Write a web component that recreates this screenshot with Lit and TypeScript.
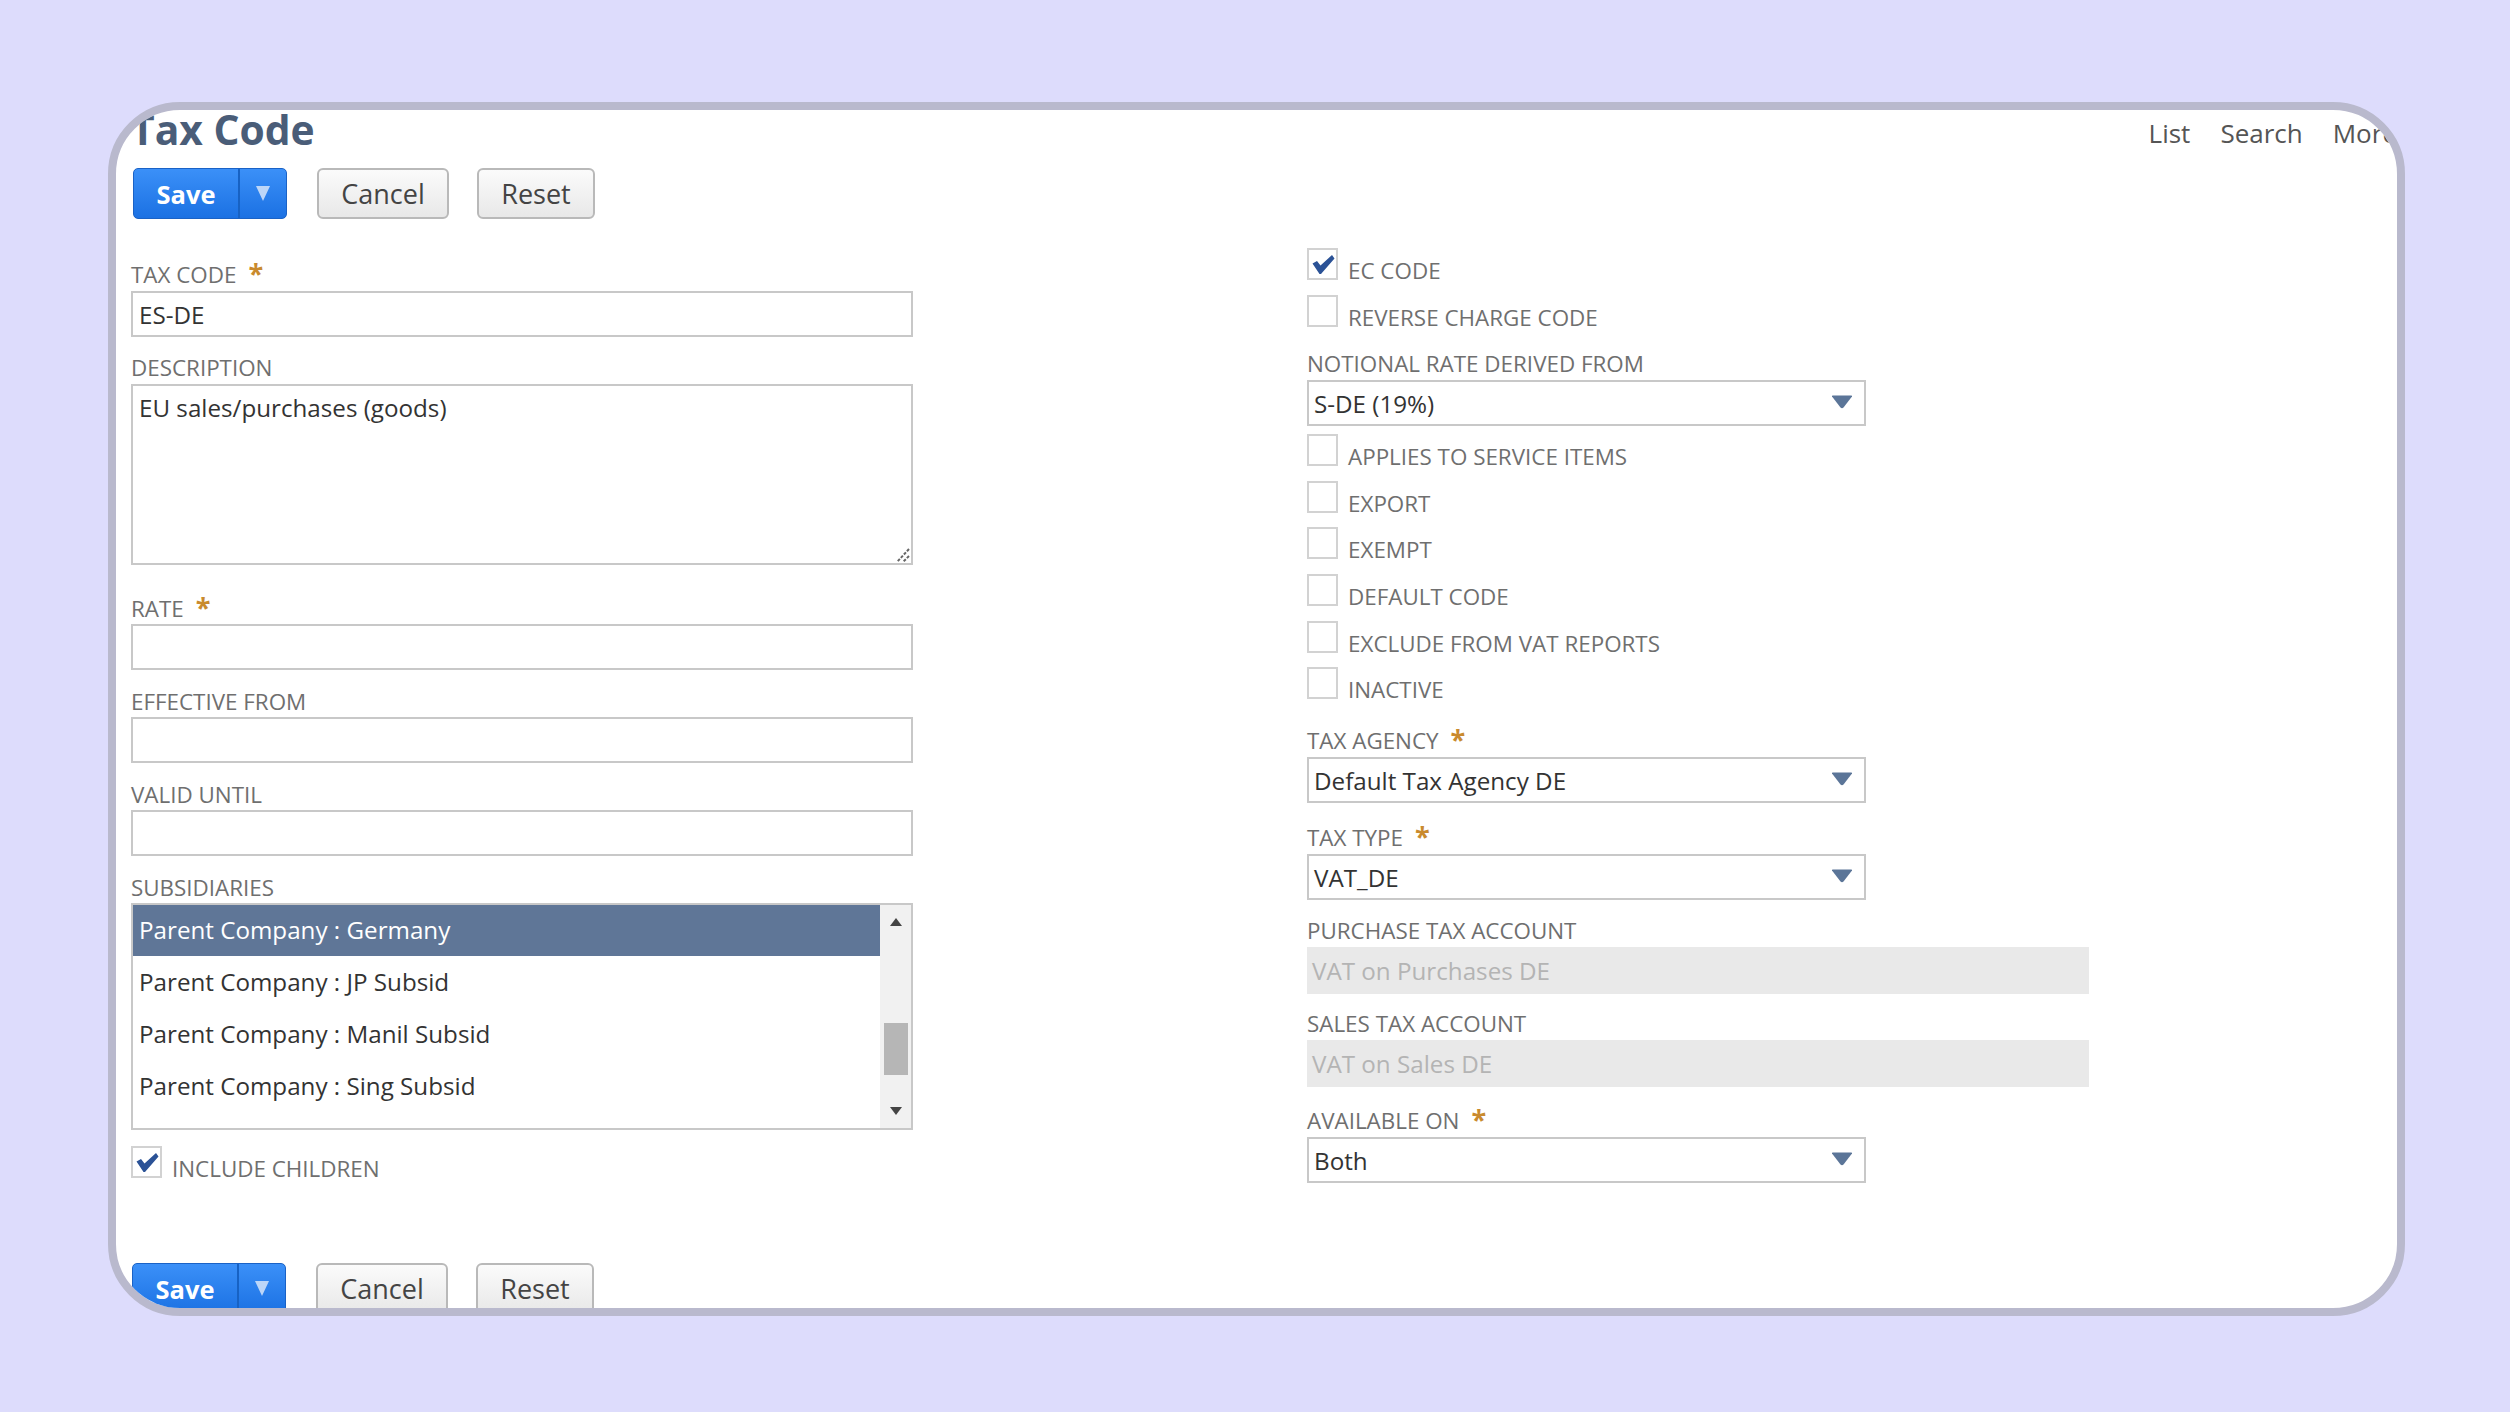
import { LitElement, html, css, svg } from "lit";
import { customElement } from "lit/decorators.js";

const checkMark = svg`<svg class="tick" viewBox="0 0 31 31"><path d="M5.5 15.5 L10 13 L13.5 17.5 L25 7 L27.5 10.5 L14 26 L12.5 26 Z" fill="#2b5296"/></svg>`;
const arrow = svg`<svg class="arrow" viewBox="0 0 22 14"><path d="M1 1.5 Q0.5 0.5 2 0.5 H20 Q21.5 0.5 21 1.5 L12.5 12.5 Q11 14 9.5 12.5 Z" fill="#5b7598"/></svg>`;

@customElement("app-root")
export class AppRoot extends LitElement {
  static styles = css`
    :host { display: block; height: 1412px; background: #dddcfc; font-family: "Open Sans", sans-serif; overflow: hidden; }
    .frame { box-sizing: border-box; width: 2297px; height: 1214px; margin-left: 108px; position: relative; top: 102px; border: 8px solid #b9b9cd; border-radius: 72px; background: #fff; overflow: hidden; }
    .header { display: flex; justify-content: space-between; height: 58px; padding: 2px 0 0 15px; box-sizing: border-box; }
    h1 { margin: 0; font-size: 40.8px; line-height: 34px; font-weight: 700; color: #4a5d78; }
    nav { display: flex; gap: 30px; font-size: 26px; line-height: 34px; color: #555; margin: 4px 0 0 0; }
    .actions { display: flex; height: 51px; margin-left: 17px; }
    .actions.bottom { margin: 70.5px 0 0 16px; }
    .split { display: flex; width: 154px; box-sizing: border-box; border: 1px solid #1a62c6; border-radius: 5px; background: linear-gradient(#3b90f8, #1b71e3); color: #fff; font-weight: 700; font-size: 25.5px; line-height: 50px; }
    .split .go { width: 104px; text-align: center; border-right: 2px solid #1762c4; }
    .split .more { flex: 1; display: flex; align-items: center; justify-content: center; }
    .tri { width: 0; height: 0; border-left: 7.5px solid transparent; border-right: 7.5px solid transparent; border-top: 15px solid #bcd6f8; margin-bottom: 1px; }
    .btn { box-sizing: border-box; border: 2px solid #b9b9b9; border-radius: 6px; background: linear-gradient(#fbfbfb, #e8e8e8); color: #444; font-size: 27px; line-height: 48px; text-align: center; }
    .cancel { width: 132px; margin-left: 30px; }
    .reset { width: 118px; margin-left: 28px; }
    .columns { display: grid; grid-template-columns: 782px 782px; column-gap: 394px; margin: 21px 0 0 15px; align-items: start; }
    .right { padding-top: 8px; }
    .label { display: flex; align-items: flex-end; box-sizing: border-box; height: 47px; padding-bottom: 3.5px; font-size: 22.4px; line-height: 26px; color: #6f6f6f; white-space: nowrap; }
    .label.low { padding-bottom: 2.5px; }
    .label.star { height: 51px; }
    .label.rate { height: 59px; }
    .label.notional { height: 39px; }
    .label.agency { height: 43.4px; }
    .label.sales { height: 46px; }
    .label.avail { height: 50px; }
    .star-mark { color: #c98a2e; font-weight: 700; font-size: 27px; line-height: 26px; margin: 0 0 2px 12px; height: 26px; }
    .input { box-sizing: border-box; height: 46px; border: 2px solid #c8c8c8; padding: 0 6px; font-size: 24.2px; line-height: 43.5px; color: #333; background: #fff; }
    .textarea { height: 181px; position: relative; }
    .grip { position: absolute; right: 1px; bottom: 0; width: 14px; height: 15px; }
    .select { display: flex; justify-content: space-between; align-items: center; width: 559px; padding: 0 11px 0 5px; }
    .select span { padding-top: 1px; }
    .arrow { width: 22px; height: 14px; margin-top: -2px; }
    .gap { height: 8px; }
    .disabled { box-sizing: border-box; height: 47px; padding: 0 5px; background: #e9e9e9; color: #b4b4b4; font-size: 24.2px; line-height: 47px; }
    .list { display: flex; box-sizing: border-box; height: 227px; border: 2px solid #c8c8c8; font-size: 24.2px; color: #333; }
    .options { flex: 1; }
    .opt { height: 52px; line-height: 50px; padding-left: 6px; }
    .opt.sel { height: 51px; margin-bottom: 1px; background: #5f7697; color: #fff; }
    .scroll { display: flex; flex-direction: column; width: 31px; background: #f1f1f1; }
    .sarrow { height: 34px; display: flex; align-items: center; justify-content: center; }
    .up { width: 0; height: 0; border-left: 6.5px solid transparent; border-right: 6.5px solid transparent; border-bottom: 8px solid #444; }
    .down { width: 0; height: 0; border-left: 6.5px solid transparent; border-right: 6.5px solid transparent; border-top: 8px solid #444; }
    .thumb { height: 52px; margin: 84px 3px 19px 4px; background: #b6b6b6; }
    .check { display: flex; height: 46.6px; }
    .include { margin-top: 16px; }
    .box { box-sizing: border-box; width: 31px; height: 32px; border: 2px solid #d2d2d2; background: #fff; flex: none; }
    .tick { display: block; width: 31px; height: 31px; margin: -2px; }
    .check span { margin: 10px 0 0 10px; font-size: 22.4px; line-height: 26px; color: #6f6f6f; }
  `;

  private label(text: string, cls = "", star = false) {
    return html`<div class="label ${cls}">${text}${star ? html`<span class="star-mark">*</span>` : ""}</div>`;
  }

  private check(text: string, on = false, cls = "") {
    return html`<div class="check ${cls}"><div class="box">${on ? checkMark : ""}</div><span>${text}</span></div>`;
  }

  private select(text: string) {
    return html`<div class="input select"><span>${text}</span>${arrow}</div>`;
  }

  private actions(cls = "") {
    return html`<div class="actions ${cls}">
      <div class="split"><div class="go">Save</div><div class="more"><div class="tri"></div></div></div>
      <div class="btn cancel">Cancel</div>
      <div class="btn reset">Reset</div>
    </div>`;
  }

  render() {
    return html`<div class="frame">
      <div class="header">
        <h1>Tax Code</h1>
        <nav><span>List</span><span>Search</span><span>More</span></nav>
      </div>
      ${this.actions()}
      <div class="columns">
        <div>
          ${this.label("TAX CODE", "star", true)}
          <div class="input">ES-DE</div>
          ${this.label("DESCRIPTION")}
          <div class="input textarea">EU sales/purchases (goods)
            <svg class="grip" viewBox="0 0 14 15"><path d="M13 1 L1 14 M13 8 L7 14" stroke="#666" stroke-width="2" stroke-dasharray="3 1.5" fill="none"/></svg>
          </div>
          ${this.label("RATE", "rate low", true)}
          <div class="input"></div>
          ${this.label("EFFECTIVE FROM", "low")}
          <div class="input"></div>
          ${this.label("VALID UNTIL", "low")}
          <div class="input"></div>
          ${this.label("SUBSIDIARIES", "low")}
          <div class="list">
            <div class="options">
              <div class="opt sel">Parent Company : Germany</div>
              <div class="opt">Parent Company : JP Subsid</div>
              <div class="opt">Parent Company : Manil Subsid</div>
              <div class="opt">Parent Company : Sing Subsid</div>
            </div>
            <div class="scroll">
              <div class="sarrow"><div class="up"></div></div>
              <div class="thumb"></div>
              <div class="sarrow"><div class="down"></div></div>
            </div>
          </div>
          ${this.check("INCLUDE CHILDREN", true, "include")}
        </div>
        <div class="right">
          ${this.check("EC CODE", true)}
          ${this.check("REVERSE CHARGE CODE")}
          ${this.label("NOTIONAL RATE DERIVED FROM", "notional")}
          ${this.select("S-DE (19%)")}
          <div class="gap"></div>
          ${this.check("APPLIES TO SERVICE ITEMS")}
          ${this.check("EXPORT")}
          ${this.check("EXEMPT")}
          ${this.check("DEFAULT CODE")}
          ${this.check("EXCLUDE FROM VAT REPORTS")}
          ${this.check("INACTIVE")}
          ${this.label("TAX AGENCY", "agency", true)}
          ${this.select("Default Tax Agency DE")}
          ${this.label("TAX TYPE", "star", true)}
          ${this.select("VAT_DE")}
          ${this.label("PURCHASE TAX ACCOUNT")}
          <div class="disabled">VAT on Purchases DE</div>
          ${this.label("SALES TAX ACCOUNT", "sales")}
          <div class="disabled">VAT on Sales DE</div>
          ${this.label("AVAILABLE ON", "avail", true)}
          ${this.select("Both")}
        </div>
      </div>
      ${this.actions("bottom")}
    </div>`;
  }
}
